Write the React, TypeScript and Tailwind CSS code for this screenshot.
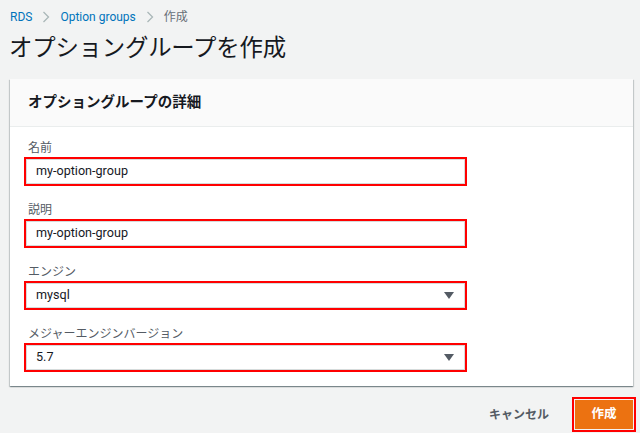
import React from "react";

const font = { fontFamily: 'Roboto, "Noto Sans CJK JP", sans-serif' };

function Caret() {
  return (
    <svg width="10" height="7" viewBox="0 0 10 7" className="shrink-0">
      <path d="M0 0 H10 L5 7 Z" fill="#545b64" />
    </svg>
  );
}

function Field({ label, value, select }: { label: string; value: string; select?: boolean }) {
  return (
    <div className="flex flex-col">
      <div className="ml-[4px] h-[16px] text-[12px] leading-[16px] text-[#545b64]">{label}</div>
      <div className="mt-[1px] w-[443px] h-[29px] border-2 border-[#ff0000] bg-white">
        <div className="h-full border border-[#d5dbdb] flex items-center pl-[9px] pr-[10px] justify-between">
          <span className="text-[12.6px] text-[#16191f]">{value}</span>
          {select && <Caret />}
        </div>
      </div>
    </div>
  );
}

export default function App() {
  return (
    <div className="w-[640px] h-[433px] bg-[#f2f3f3] overflow-hidden" style={font}>
      <div className="pl-[10px] pt-[8px] flex items-center h-[18px] box-content text-[12px] leading-[18px]">
        <span className="text-[#0073bb]">RDS</span>
        <svg width="8" height="12" viewBox="0 0 8 12" className="ml-[10px] mr-[10px]">
          <path d="M1.5 1 L6.5 6 L1.5 11" fill="none" stroke="#aab7b8" strokeWidth="1.3" />
        </svg>
        <span className="text-[#0073bb]">Option groups</span>
        <svg width="8" height="12" viewBox="0 0 8 12" className="ml-[10px] mr-[10px]">
          <path d="M1.5 1 L6.5 6 L1.5 11" fill="none" stroke="#aab7b8" strokeWidth="1.3" />
        </svg>
        <span className="text-[#687078]">作成</span>
      </div>
      <h1 className="pl-[9px] mt-[7px] text-[23.4px] leading-[30px] text-[#16191f] tracking-[-0.2px]">
        オプショングループを作成
      </h1>
      <div className="ml-[10px] mt-[16px] w-[623px] bg-white shadow-[0_1px_1px_0_rgba(0,28,36,0.3),1px_1px_1px_0_rgba(0,28,36,0.15),-1px_1px_1px_0_rgba(0,28,36,0.15)]">
        <div className="h-[48px] bg-[#fafafa] border-b border-[#eaeded] flex items-center pl-[18px]">
          <span className="text-[14.5px] font-bold text-[#16191f]">オプショングループの詳細</span>
        </div>
        <div className="pl-[14px] pt-[13px] pb-[14px] flex flex-col gap-[16px]">
          <Field label="名前" value="my-option-group" />
          <Field label="説明" value="my-option-group" />
          <Field label="エンジン" value="mysql" select />
          <Field label="メジャーエンジンバージョン" value="5.7" select />
        </div>
      </div>
      <div className="mt-[11px] flex items-center justify-end pr-[4px]">
        <span className="text-[12px] font-bold text-[#545b64] mr-[23px]">キャンセル</span>
        <div className="w-[64px] h-[35px] border-2 border-[#ff0000] p-[1px]">
          <div className="h-full bg-[#ec7211] flex items-center justify-center text-white text-[12.5px] font-bold">
            作成
          </div>
        </div>
      </div>
    </div>
  );
}
